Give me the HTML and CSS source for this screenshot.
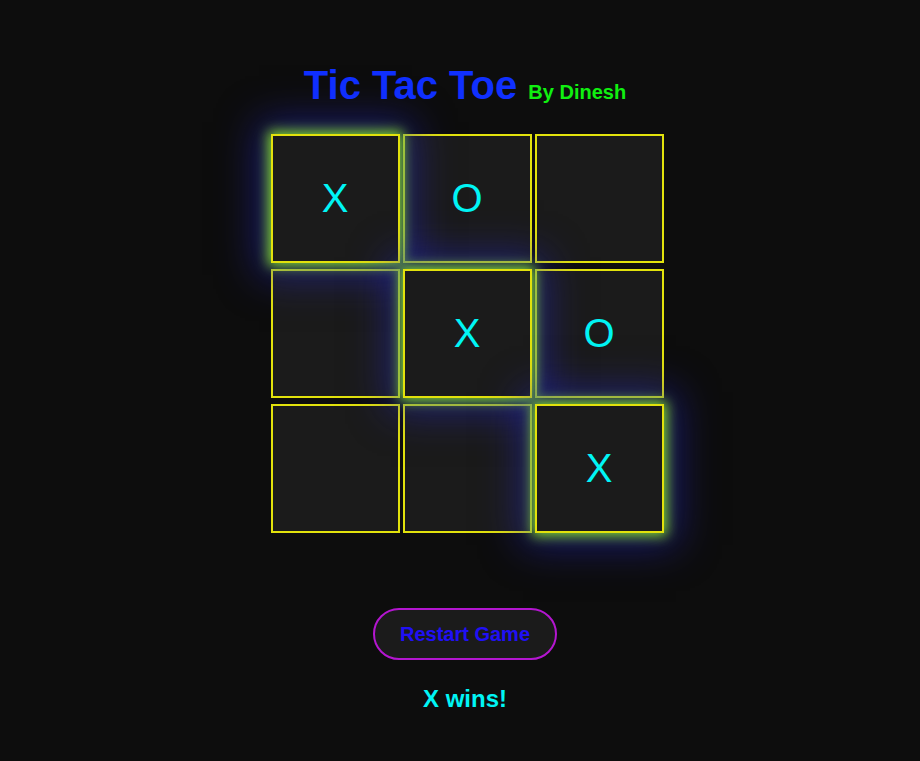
FILE: index.html
```html
<!DOCTYPE html>
<html lang="en">
<head>
<meta charset="utf-8">
<title>Tic Tac Toe</title>
<link rel="stylesheet" href="styles.css">
</head>
<body>
<main class="game">
  <h1 class="title">Tic Tac Toe <span class="byline">By Dinesh</span></h1>
  <div class="board-wrap">
    <div class="board">
      <div class="cell win">X</div>
      <div class="cell">O</div>
      <div class="cell"></div>
      <div class="cell"></div>
      <div class="cell win">X</div>
      <div class="cell">O</div>
      <div class="cell"></div>
      <div class="cell"></div>
      <div class="cell win">X</div>
    </div>
  </div>
  <button class="restart" type="button">Restart Game</button>
  <p class="status">X wins!</p>
</main>
</body>
</html>
```
FILE: styles.css
```css
html, body {
  margin: 0;
  background: #0d0d0d;
}
body {
  font-family: "Liberation Sans", Arial, sans-serif;
  padding: 62px 0 0 10px;
  min-height: 761px;
  box-sizing: border-box;
}
.game {
  display: flex;
  flex-direction: column;
  align-items: center;
}
.title {
  margin: 0 0 19px;
  font-size: 40px;
  font-weight: bold;
  color: #1030ff;
  line-height: 46px;
}
.byline {
  font-size: 20px;
  color: #10f010;
}
.board-wrap {
  padding-left: 4px;
}
.board {
  display: grid;
  grid-template-columns: repeat(3, 129px);
  grid-auto-rows: 129px;
  column-gap: 3px;
  row-gap: 6px;
}
.cell {
  box-sizing: border-box;
  border: 2px solid #e2e20c;
  background: rgba(40, 40, 40, 0.55);
  display: flex;
  align-items: center;
  justify-content: center;
  color: #00f5f5;
  font-size: 40px;
}
.cell.win {
  position: relative;
  z-index: 1;
  background: #1b1b1b;
  box-shadow: 0 0 12px 3px rgba(140, 235, 40, 0.9), 0 0 38px 12px rgba(40, 40, 215, 0.5);
}
.restart {
  margin-top: 75px;
  padding: 12px 25px;
  line-height: 24px;
  font-family: "Liberation Sans", Arial, sans-serif;
  font-size: 20px;
  font-weight: bold;
  color: #2010f5;
  background: #1b1b1b;
  border: 2px solid #b416d0;
  border-radius: 30px;
}
.status {
  margin: 25px 0 0;
  font-size: 24px;
  font-weight: bold;
  color: #00f5f5;
  line-height: 28px;
}
```
